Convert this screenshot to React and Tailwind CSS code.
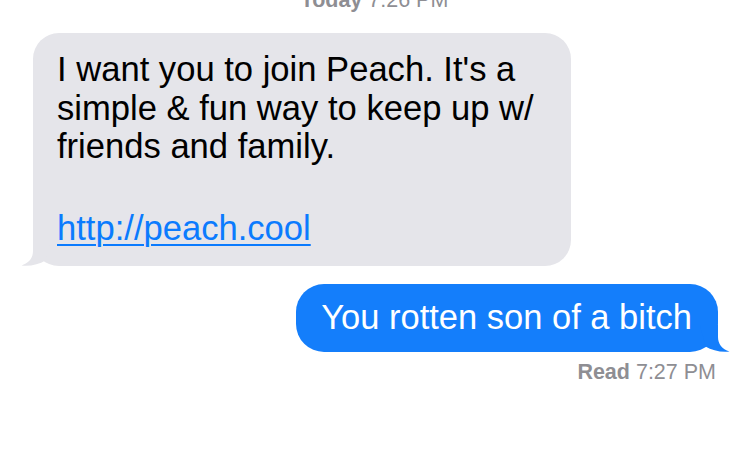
import React from "react";

function Tail({ color, flip }) {
  return (
    <svg
      width="30"
      height="28"
      viewBox="0 0 30 28"
      className={
        flip
          ? "absolute -right-[12px] -bottom-[1px] -scale-x-100"
          : "absolute -left-[12px] -bottom-[1px]"
      }
    >
      <path
        d="M12 0 V12 C12 19 8 24 0.5 26.5 C9 27.5 18 25.5 24.5 21.5 L30 0 Z"
        fill={color}
      />
    </svg>
  );
}

export default function App() {
  return (
    <div className="flex flex-col w-[749px] h-[457px] overflow-hidden bg-white font-['Liberation_Sans',Arial,sans-serif]">
      <p className="-mt-[10px] text-center text-[21.5px] leading-[21.5px] text-[#8e8e93]">
        <span className="font-bold">Today</span> 7:26 PM
      </p>

      <div className="mt-[21.5px] pl-[33px]">
        <div className="relative w-[538px] rounded-[26px] bg-[#e5e5ea] pt-[17px] pb-[20px] pl-[24px] text-[34.6px] leading-[38.5px] text-black whitespace-nowrap">
          <Tail color="#e5e5ea" />
          <p className="relative">
            I want you to join Peach. It's a
            <br />
            simple &amp; fun way to keep up w/
            <br />
            friends and family.
          </p>
          <p className="relative mt-[45px] leading-[35px]">
            <a href="#" className="text-[#0b7bfe] underline decoration-[2px] underline-offset-[4px]">
              http://peach.cool
            </a>
          </p>
        </div>
      </div>

      <div className="mt-[18px] flex justify-end pr-[31px]">
        <div className="relative rounded-[28px] bg-[#147efb] pt-[16px] pb-[17px] pl-[25px] pr-[26px] text-[34.5px] leading-[35px] text-white whitespace-nowrap">
          <Tail color="#147efb" flip />
          <span className="relative">You rotten son of a bitch</span>
        </div>
      </div>

      <p className="mt-[10px] pr-[33px] text-right text-[21.5px] leading-[21.5px] text-[#8e8e93]">
        <span className="font-bold">Read</span> 7:27 PM
      </p>
    </div>
  );
}
